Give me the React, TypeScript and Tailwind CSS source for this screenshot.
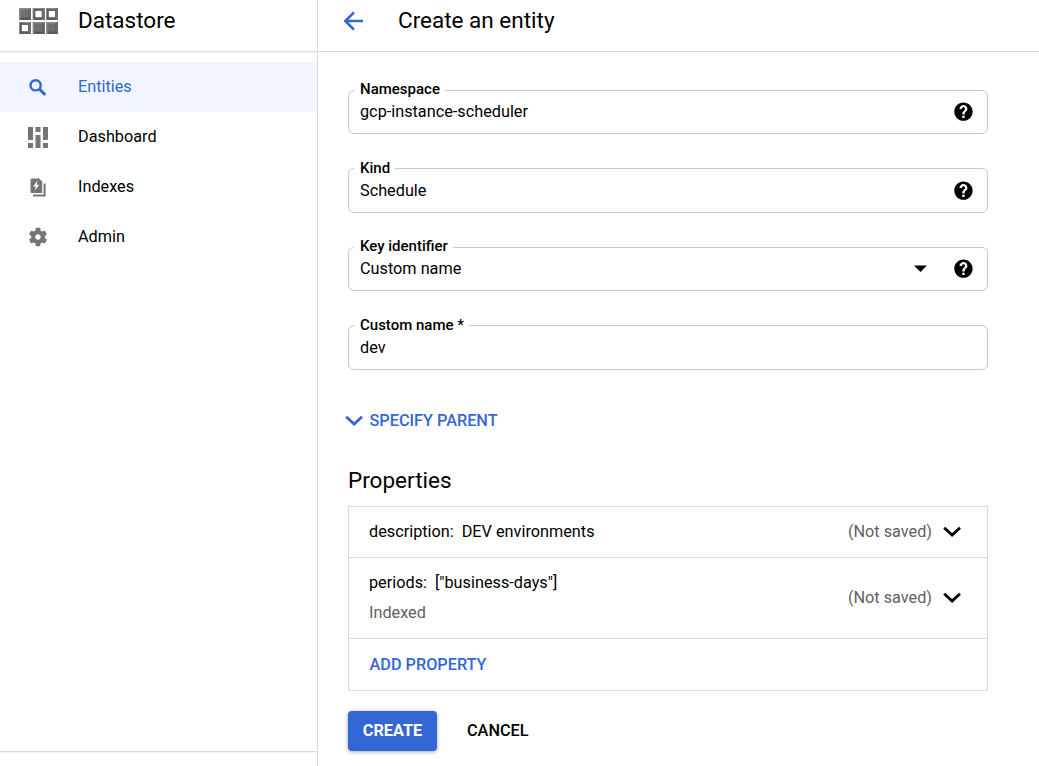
import React from "react";

const Logo = () => (
  <svg className="block" width="40" height="27" viewBox="0 0 40 27">
    {[
      [0, 0, 1],
      [13.6, 0, 0],
      [27, 0, 0],
      [0, 14, 0],
      [13.6, 14, 1],
      [27, 14, 1],
    ].map(([x, y, solid], i) => (
      <g key={i} transform={`translate(${x} ${y})`}>
        <rect width="12" height="12" fill="#8a8a8a" />
        {solid ? (
          <>
            <path d="M1.5 1.5H10V10H1.5Z" fill="#707070" />
            <path d="M0.5 12L2.5 9.5H9.5V2L12 0V12Z" fill="#585858" />
            <path d="M9.8 1.5L12 0V12L9.8 9.8Z" fill="#686868" />
          </>
        ) : (
          <>
            <rect x="1" y="1" width="11" height="11" fill="#5c5c5c" />
            <path d="M12 0V12H9.5V2.5H1Z" fill="#707070" />
            <rect x="2.8" y="3" width="6.2" height="6.2" fill="#fff" />
          </>
        )}
      </g>
    ))}
  </svg>
);

const SearchIcon = () => (
  <svg width="20" height="20" viewBox="0 0 20 20" fill="none" stroke="#3367d6">
    <circle cx="7.6" cy="7.3" r="5.1" strokeWidth="2.4" />
    <path d="M11.2 10.9L17.2 16.9" strokeWidth="2.9" />
  </svg>
);

const DashboardIcon = () => (
  <svg width="20" height="21" viewBox="0 0 20 21" fill="#757575">
    <path d="M0 0h5v13H0zM0 16h5v5H0zM7.5 0h5v5h-5zM7.5 8h5v13h-5zM15 0h5v13h-5zM15 16h5v5h-5z" />
  </svg>
);

const IndexesIcon = () => (
  <svg width="16" height="20" viewBox="0 0 16 20">
    <path fill="#757575" d="M1.8 0.6H9.2L12.2 3.6V15H1.8Q0.5 15 0.5 13.8V1.8Q0.5 0.6 1.8 0.6Z" />
    <path fill="none" stroke="#757575" strokeWidth="2" d="M14.6 5.5V17.6H3" />
    <path fill="#fff" d="M7.6 2.5L3.2 8.6H5.8L4.8 12.8L9.2 6.8H6.6Z" />
  </svg>
);

const GearIcon = () => (
  <svg className="-mt-px" width="22" height="22" viewBox="0 0 24 24" fill="#757575">
    <path d="M19.43 12.98c.04-.32.07-.64.07-.98s-.03-.66-.07-.98l2.11-1.65c.19-.15.24-.42.12-.64l-2-3.46c-.12-.22-.39-.3-.61-.22l-2.49 1c-.52-.4-1.08-.73-1.69-.98l-.38-2.65C14.46 2.18 14.25 2 14 2h-4c-.25 0-.46.18-.49.42l-.38 2.65c-.61.25-1.17.59-1.69.98l-2.49-1c-.23-.09-.49 0-.61.22l-2 3.46c-.13.22-.07.49.12.64l2.11 1.65c-.04.32-.07.65-.07.98s.03.66.07.98l-2.11 1.65c-.19.15-.24.42-.12.64l2 3.46c.12.22.39.3.61.22l2.49-1c.52.4 1.08.73 1.69.98l.38 2.65c.03.24.24.42.49.42h4c.25 0 .46-.18.49-.42l.38-2.65c.61-.25 1.17-.59 1.69-.98l2.49 1c.23.09.49 0 .61-.22l2-3.46c.12-.22.07-.49-.12-.64l-2.11-1.65zM12 15c-1.66 0-3-1.34-3-3s1.34-3 3-3 3 1.34 3 3-1.34 3-3 3z" />
  </svg>
);

const BackIcon = () => (
  <svg width="20" height="20" viewBox="0 0 20 20" fill="none" stroke="#3367d6" strokeWidth="2.6">
    <path d="M20 10H2.6M11 1.3L2.3 10L11 18.7" />
  </svg>
);

const HelpIcon = () => (
  <svg className="block" width="22" height="22" viewBox="-0.5 0.4 24 24" fill="#000">
    <path d="M12 2C6.48 2 2 6.48 2 12s4.48 10 10 10 10-4.48 10-10S17.52 2 12 2zm1.3 17h-2.6v-2.4h2.6V19zm2.07-7.75l-.9.92C13.75 12.9 13.3 13.5 13.3 15h-2.6v-.5c0-1.1.45-2.1 1.17-2.83l1.24-1.26c.37-.36.59-.86.59-1.41 0-.95-.75-1.7-1.7-1.7s-1.7.75-1.7 1.7H7.7c0-2.38 1.92-4.3 4.3-4.3s4.3 1.92 4.3 4.3c0 .88-.36 1.68-.93 2.25z" />
  </svg>
);

const Chevron = ({ color }: { color: string }) => (
  <svg className="block" width="18" height="12" viewBox="0 0 18 12" fill="none" stroke={color} strokeWidth="2.8">
    <path d="M1.2 1.7L9.1 9L17 1.7" />
  </svg>
);

const navItems = [
  { label: "Entities", icon: <SearchIcon />, active: true },
  { label: "Dashboard", icon: <DashboardIcon />, active: false },
  { label: "Indexes", icon: <IndexesIcon />, active: false },
  { label: "Admin", icon: <GearIcon />, active: false },
];

type FieldProps = { label: string; value: string; size: string; labelTop: string; help?: boolean; select?: boolean };

const Field = ({ label, value, size, labelTop, help, select }: FieldProps) => (
  <div className={`relative flex items-center rounded-[6px] border border-[#c8c8c8] pr-[13px] pl-[11px] ${size}`}>
    <label
      className={`absolute left-[5px] bg-white pr-[5px] pl-[6px] text-[15px] leading-[20px] font-medium ${labelTop}`}
    >
      {label}
    </label>
    <span className="flex-1 leading-5">{value}</span>
    {select && (
      <svg className="mr-[25px]" width="14" height="8" viewBox="0 0 14 8">
        <path d="M1 0.6H13.9L7.5 7.1Z" />
      </svg>
    )}
    {help && <HelpIcon />}
  </div>
);

const NotSaved = () => (
  <div className="flex items-center gap-[11px] text-[#616161]">
    <span>(Not saved)</span>
    <Chevron color="#000" />
  </div>
);

export default function App() {
  return (
    <div className="flex h-[766px] w-[1039px] overflow-hidden bg-white font-['Roboto',sans-serif] text-[16.25px] leading-5 text-black">
      <aside className="flex w-[318px] flex-col border-r border-[#dadada]">
        <header className="flex h-[52px] items-start border-b border-[#dadada] pt-2 pl-[19px] shadow-[0_1px_0_#f3f3f3]">
          <Logo />
          <h1 className="-mt-[2px] ml-[19px] text-[22.5px] leading-[28px]">Datastore</h1>
        </header>
        <nav className="flex-1 pt-[10px]">
          {navItems.map((item) => (
            <a
              key={item.label}
              className={`flex h-[50px] items-center ${item.active ? "bg-[#f0f5ff] text-[#3367d6]" : ""}`}
            >
              <span className="flex w-[76px] justify-center pt-px">{item.icon}</span>
              <span className="pl-[2px]">{item.label}</span>
            </a>
          ))}
        </nav>
        <div className="h-[15px] border-t border-[#dadada] shadow-[inset_0_1px_0_#f3f3f3]" />
      </aside>
      <main className="flex-1">
        <header className="flex h-[52px] items-start border-b border-[#dadada] pl-[25px]">
          <span className="pt-[11px]">
            <BackIcon />
          </span>
          <h2 className="mt-[6px] ml-[35px] text-[22.5px] leading-[28px]">Create an entity</h2>
        </header>
        <div className="w-[670px] pt-[38px] pl-[30px]">
          <Field label="Namespace" value="gcp-instance-scheduler" size="h-[44px]" labelTop="-top-[12px]" help />
          <Field label="Kind" value="Schedule" size="mt-[34px] h-[45px]" labelTop="-top-[11px]" help />
          <Field
            label="Key identifier"
            value="Custom name"
            size="mt-[34px] h-[44px]"
            labelTop="-top-[12px]"
            help
            select
          />
          <Field label="Custom name *" value="dev" size="mt-[34px] h-[45px]" labelTop="-top-[11px]" />
          <button className="mt-[41px] -ml-[3px] flex h-5 items-center gap-[6.5px] font-medium text-[#3367d6]">
            <Chevron color="#3367d6" />
            SPECIFY PARENT
          </button>
          <h3 className="mt-[35px] text-[22.5px] leading-[28px]">Properties</h3>
          <section className="mt-[12px] border border-[#dadada]">
            <div className="flex h-[51px] items-center justify-between border-b border-[#dadada] pr-[26px] pl-[20px]">
              <span>
                description:<span className="ml-2">DEV environments</span>
              </span>
              <NotSaved />
            </div>
            <div className="flex h-[81px] items-center justify-between border-b border-[#dadada] pr-[26px] pl-[20px]">
              <div>
                <p>
                  periods:<span className="ml-2">["business-days"]</span>
                </p>
                <p className="mt-[10px] text-[#616161]">Indexed</p>
              </div>
              <NotSaved />
            </div>
            <div className="flex h-[51px] items-center pl-[20.5px]">
              <button className="font-medium text-[#3367d6]">ADD PROPERTY</button>
            </div>
          </section>
          <div className="mt-5 flex items-center">
            <button className="h-10 w-[89px] rounded-[4px] bg-[#3367d6] font-bold text-white shadow-[0_1px_4px_rgba(0,0,0,0.35)]">
              CREATE
            </button>
            <button className="ml-[30px] font-medium">CANCEL</button>
          </div>
        </div>
      </main>
    </div>
  );
}
